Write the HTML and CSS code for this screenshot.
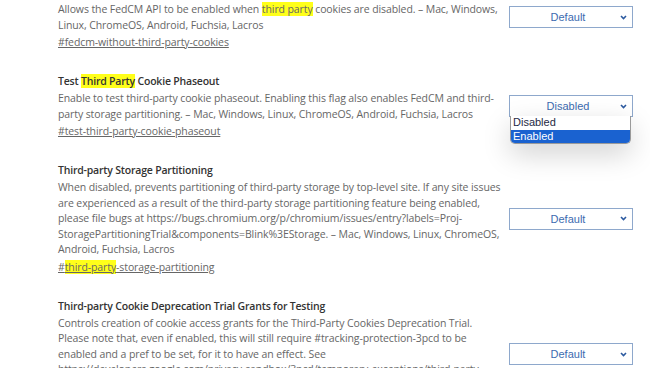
FILE: index.html
```html
<!DOCTYPE html>
<html lang="en">
<head>
    <meta charset="UTF-8">
    <meta name="viewport" content="width=device-width, initial-scale=1.0">
    <title>Experiments</title>
    <link rel="stylesheet" href="styles.css">
</head>
<body>
    <div class="flags">
        <div class="experiment">
            <div class="info">
                <h3 class="name">FedCM without <mark>third-party</mark> cookies</h3>
                <p class="desc">Allows the FedCM API to be enabled when <mark>third party</mark> cookies are disabled. – Mac, Windows,<br>Linux, ChromeOS, Android, Fuchsia, Lacros</p>
                <a class="link" href="#fedcm-without-third-party-cookies">#fedcm-without-third-party-cookies</a>
            </div>
            <div class="select">
                <span class="value">Default</span>
                <svg class="chevron" width="7" height="5" viewBox="0 0 7 5"><path d="M1 1l2.5 2.5L6 1" fill="none" stroke="#2c5aa0" stroke-width="1.6"/></svg>
            </div>
        </div>

        <div class="experiment">
            <div class="info">
                <h3 class="name">Test <mark>Third Party</mark> Cookie Phaseout</h3>
                <p class="desc">Enable to test third-party cookie phaseout. Enabling this flag also enables FedCM and third-<br>party storage partitioning. – Mac, Windows, Linux, ChromeOS, Android, Fuchsia, Lacros</p>
                <a class="link" href="#test-third-party-cookie-phaseout">#test-third-party-cookie-phaseout</a>
            </div>
            <div class="select open">
                <span class="value">Disabled</span>
                <svg class="chevron" width="7" height="5" viewBox="0 0 7 5"><path d="M1 1l2.5 2.5L6 1" fill="none" stroke="#2c5aa0" stroke-width="1.6"/></svg>
                <ul class="options">
                    <li>Disabled</li>
                    <li class="selected">Enabled</li>
                </ul>
            </div>
        </div>

        <div class="experiment">
            <div class="info">
                <h3 class="name">Third-party Storage Partitioning</h3>
                <p class="desc">When disabled, prevents partitioning of third-party storage by top-level site. If any site issues<br>are experienced as a result of the third-party storage partitioning feature being enabled,<br>please file bugs at https://bugs.chromium.org/p/chromium/issues/entry?labels=Proj-<br>StoragePartitioningTrial&amp;components=Blink%3EStorage. – Mac, Windows, Linux, ChromeOS,<br>Android, Fuchsia, Lacros</p>
                <a class="link" href="#third-party-storage-partitioning">#<mark>third-party</mark>-storage-partitioning</a>
            </div>
            <div class="select">
                <span class="value">Default</span>
                <svg class="chevron" width="7" height="5" viewBox="0 0 7 5"><path d="M1 1l2.5 2.5L6 1" fill="none" stroke="#2c5aa0" stroke-width="1.6"/></svg>
            </div>
        </div>

        <div class="experiment">
            <div class="info">
                <h3 class="name">Third-party Cookie Deprecation Trial Grants for Testing</h3>
                <p class="desc">Controls creation of cookie access grants for the Third-Party Cookies Deprecation Trial.<br>Please note that, even if enabled, this will still require #tracking-protection-3pcd to be<br>enabled and a pref to be set, for it to have an effect. See<br>https://developers.google.com/privacy-sandbox/3pcd/temporary-exceptions/third-party-<br>deprecation-trial for more details. – Mac, Windows, Linux, ChromeOS, Android, Fuchsia, Lacros</p>
                <a class="link" href="#tpcd-trial-grants-for-testing">#tpcd-trial-grants-for-testing</a>
            </div>
            <div class="select">
                <span class="value">Default</span>
                <svg class="chevron" width="7" height="5" viewBox="0 0 7 5"><path d="M1 1l2.5 2.5L6 1" fill="none" stroke="#2c5aa0" stroke-width="1.6"/></svg>
            </div>
        </div>
    </div>
</body>
</html>
```

FILE: styles.css
```css
* {
    box-sizing: border-box;
    margin: 0;
    padding: 0;
}

body {
    background: #fff;
    font-family: 'Open Sans', 'Noto Sans', sans-serif;
    font-size: 10.5px;
    letter-spacing: -0.1px;
    color: #666;
    overflow: hidden;
}

.flags {
    margin-top: -27px;
    padding: 0 17px 0 58px;
}

.experiment {
    display: flex;
    align-items: center;
    gap: 10px;
    padding: 11px 0 11.5px;
}

.info {
    flex: 1;
    min-width: 0;
    white-space: nowrap;
}

.name {
    font-size: 10.5px;
    font-weight: 600;
    letter-spacing: -0.2px;
    line-height: 16px;
    color: #333;
}

.desc {
    margin-top: 2px;
    line-height: 15.5px;
}

.link {
    display: block;
    margin-top: 2px;
    line-height: 15.5px;
    color: #666;
    text-decoration: underline;
}

mark {
    background: #ffff1a;
    color: inherit;
}

.select {
    position: relative;
    flex: none;
    display: flex;
    align-items: center;
    width: 124px;
    height: 22px;
    border: 1px solid #8ea8cc;
    font-family: 'Liberation Sans', Arial, sans-serif;
    font-size: 11px;
    letter-spacing: 0;
    color: #3d6bb0;
}

.value {
    flex: 1;
    text-align: center;
    padding-left: 6px;
}

.chevron {
    margin-right: 5px;
}

.options {
    position: absolute;
    top: 20px;
    left: 0;
    right: 1px;
    list-style: none;
    background: #fff;
    border: 1px solid #9a9a9a;
    border-top: none;
    border-radius: 0 0 5px 5px;
    overflow: hidden;
    box-shadow: 0 10px 28px rgba(0, 0, 0, 0.18);
    color: #1f2a44;
}

.options li {
    height: 13.5px;
    line-height: 13.5px;
    padding-left: 2px;
}

.options li.selected {
    background: #1a62d0;
    color: #fff;
}
```
